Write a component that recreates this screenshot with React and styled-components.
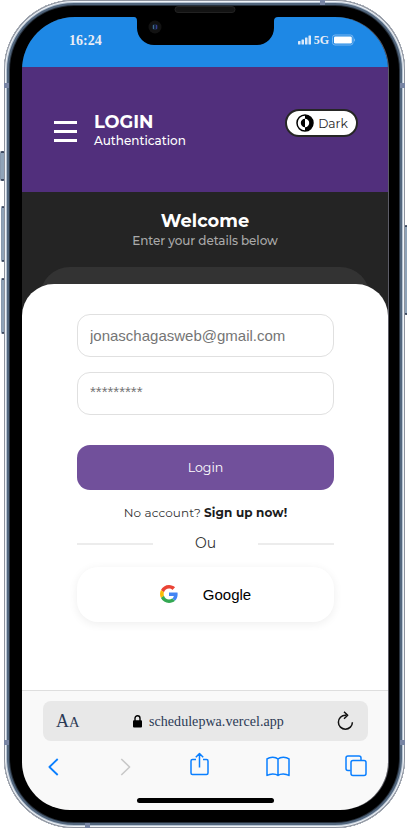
import React from 'react';
import styled, { createGlobalStyle } from 'styled-components';

const GlobalStyle = createGlobalStyle`
  * { box-sizing: border-box; }
  body { margin: 0; background: #fff; overflow: hidden; }
  button, input { font: inherit; margin: 0; }
`;

const brandFont = 'Montserrat, Inter, sans-serif';
const systemFont = '"Liberation Sans", Arial, sans-serif';
const serifFont = '"Liberation Serif", "Times New Roman", serif';

const Stage = styled.main`
  position: relative;
  width: 407px;
  height: 828px;
  padding: 0 2px 0 4px;
  overflow: hidden;
`;

const Phone = styled.div`
  position: relative;
  width: 401px;
  height: 828px;
  padding: 17px 17px 18px 18px;
  border-radius: 70px;
  background: #000;
  box-shadow:
    inset 0 0 0 1px #8d929d,
    inset 0 0 0 2px #f0f4f8,
    inset 0 0 0 3px #b6c3d2,
    inset 0 0 0 5px #52667d,
    inset 0 0 0 6px #27313d;
`;

const SideKey = styled.span`
  position: absolute;
  left: ${(p) => (p.$right ? '404px' : p.$wide ? '0' : '1px')};
  top: ${(p) => p.$top}px;
  width: ${(p) => (p.$wide ? 5 : 4)}px;
  height: ${(p) => p.$height}px;
  border: 1px solid #3c4960;
  border-width: 2px 1px;
  border-left-color: ${(p) => (p.$right ? '#25324a' : '#8798ad')};
  border-radius: 2px;
  background: #8fa3b8;
`;

const Band = styled.i`
  position: absolute;
  left: ${(p) => p.$left}px;
  top: ${(p) => p.$top}px;
  width: 5px;
  height: 5px;
  background: #7885a4;
`;

const Notch = styled.svg`
  position: absolute;
  left: 130px;
  top: 0;
  width: 144px;
  height: 48px;
`;

const Screen = styled.div`
  width: 366px;
  height: 793px;
  display: flex;
  flex-direction: column;
  overflow: hidden;
  border-radius: 53px 53px 48px 48px;
  background: #242424;
  box-shadow: 1px 0 0 #5c5c66;
`;

const StatusBar = styled.div`
  flex: none;
  height: 50px;
  padding: 0 32px 0 47px;
  display: flex;
  justify-content: space-between;
  background: #1e88e5;
  color: #e9edf5;
  font-family: ${serifFont};
  font-weight: 700;
`;

const Clock = styled.span`
  padding-top: 15px;
  font-size: 14px;
  line-height: 17px;
`;

const Signals = styled.div`
  display: flex;
  align-items: center;
  height: 12px;
  margin-top: 17px;
  font-size: 12px;
  gap: 3px;
`;

const Header = styled.header`
  flex: none;
  height: 125px;
  padding: 42px 30px 0 32px;
  display: flex;
  align-items: flex-start;
  background: #512f7c;
  color: #fff;
  font-family: ${brandFont};
`;

const Burger = styled.div`
  width: 23px;
  margin-top: 12px;
  display: grid;
  gap: 6px;
`;

const BurgerLine = styled.span`
  height: 3px;
  background: #fff;
`;

const Titles = styled.div`
  margin: 2px 0 0 17px;
  flex: 1;
`;

const Title = styled.h1`
  margin: 0;
  font-size: 17.8px;
  line-height: 21px;
  font-weight: 700;
  white-space: nowrap;
`;

const Subtitle = styled.p`
  margin: ${(p) => (p.$muted ? '1px' : '0')} 0 0;
  font-size: 12px;
  line-height: 17px;
  font-weight: 500;
  color: ${(p) => (p.$muted ? '#aaa' : '#fff')};
  letter-spacing: ${(p) => (p.$muted ? '-0.08px' : '0')};
  white-space: nowrap;
`;

const ThemeButton = styled.button`
  width: 73px;
  height: 28px;
  padding: 0 0 0 1px;
  display: flex;
  align-items: center;
  justify-content: center;
  gap: 4px;
  border: 2px solid #262626;
  border-radius: 14px;
  background: #fff;
  color: #242424;
  font-size: 12.3px;
`;

const Hero = styled.section`
  flex: none;
  height: 92px;
  padding-top: 18px;
  text-align: center;
  color: #fff;
  font-family: ${brandFont};
`;

const CardBack = styled.div`
  width: 330px;
  height: 32px;
  margin: 18px auto 0;
  border-radius: 30px 30px 0 0;
  background: #333;
`;

const Card = styled.form`
  flex: none;
  height: 406px;
  padding: 30px 54px 0 55px;
  display: flex;
  flex-direction: column;
  border-radius: 32px 32px 0 0;
  background: #fff;
  font-family: ${brandFont};
`;

const Field = styled.input`
  width: 100%;
  height: 43px;
  margin-bottom: 15px;
  padding: 0 12px 1px;
  border: 1px solid #e0e0e0;
  border-radius: 13px;
  outline: none;
  background: #fff;
  font-family: ${systemFont};
  font-size: 15px;
  &::placeholder { color: #757575; opacity: 1; }
`;

const MaskedField = styled(Field)`
  padding-bottom: 5px;
`;

const LoginButton = styled.button`
  height: 45px;
  margin-top: 15px;
  padding: 0 0 1px;
  border: 0;
  border-radius: 13px;
  background: #71509b;
  color: #fff;
  font-size: 12.6px;
`;

const SignUp = styled.p`
  margin: 15px 0 0;
  text-align: center;
  font-size: 12px;
  line-height: 16px;
  letter-spacing: 0.1px;
  color: #333;
  white-space: nowrap;
  b { color: #1c1c1c; }
`;

const Divider = styled.div`
  height: 18px;
  margin-top: 13px;
  display: grid;
  grid-template-columns: 76px 1fr 76px;
  align-items: center;
  text-align: center;
  font-size: 14px;
  color: #333;
`;

const Rule = styled.span`
  height: 2px;
  margin-top: 1px;
  background: #ececec;
`;

const GoogleButton = styled.button`
  height: 55px;
  margin-top: 15px;
  padding: 0 0 1px;
  display: flex;
  align-items: center;
  justify-content: center;
  gap: 25px;
  border: 0;
  border-radius: 21px;
  background: #fff;
  box-shadow: 0 2px 10px rgba(0, 0, 0, 0.07);
  color: #000;
  font-family: ${systemFont};
  font-size: 15px;
`;

const Browser = styled.footer`
  flex: 1;
  padding: 10px 20px 0 21px;
  border-top: 1px solid #dedede;
  background: #f9f9f9;
  font-family: ${serifFont};
`;

const AddressBar = styled.div`
  height: 40px;
  padding: 0 14px 0 13px;
  display: flex;
  align-items: center;
  border-radius: 8px;
  background: #e8e8e8;
  color: #2b3a55;
`;

const TextSize = styled.span`
  width: 77px;
  font-size: 18px;
  line-height: 20px;
  small { font-size: 14.5px; }
`;

const Address = styled.span`
  flex: 1;
  margin-left: 7px;
  padding-top: 1px;
  font-size: 14px;
  line-height: 20px;
  letter-spacing: 0.05px;
`;

const Toolbar = styled.nav`
  height: 26px;
  margin-top: 11px;
  padding-left: 5px;
  display: grid;
  grid-template-columns: 72px 70px 76px 79px 22px;
  align-items: start;
`;

const Glyph = styled.svg`
  flex: none;
  display: block;
  width: ${(p) => p.$w}px;
  height: ${(p) => p.$h}px;
  margin-top: ${(p) => p.$drop || 0}px;
  fill: none;
  stroke: ${(p) => p.$color || 'none'};
  stroke-width: 1.5;
  stroke-linejoin: round;
`;

const HomeBar = styled.div`
  width: 137px;
  height: 5px;
  margin: 20px auto 0;
  border-radius: 3px;
  background: #000;
`;

const blue = '#0a7fff';

function StatusIcons() {
  return (
    <Signals>
      <Glyph $w={13} $h={10} viewBox="0 0 13 10">
        <g fill="#dbe9fa">
          <rect y="6" width="2.5" height="3.5" rx=".5" />
          <rect x="3.5" y="4.5" width="2.5" height="5" rx=".5" />
          <rect x="7" y="2.5" width="2.5" height="7" rx=".5" />
          <rect x="10.5" y=".5" width="2.5" height="9" rx=".5" />
        </g>
      </Glyph>
      <span>5G</span>
      <Glyph $w={24} $h={12} viewBox="0 0 24 12">
        <rect x=".5" y="1" width="20.5" height="10" rx="2.5" stroke="#78b6f0" strokeWidth="1" />
        <rect x="2" y="2.5" width="17.8" height="7" rx="1.3" fill="#fff" />
        <path d="M22 4.3C23.4 5 23.4 7 22 7.7Z" fill="#78b6f0" />
      </Glyph>
    </Signals>
  );
}

function GoogleLogo() {
  return (
    <Glyph $w={18} $h={18} viewBox="0 0 48 48">
      <path fill="#EA4335" d="M24 9.5c3.54 0 6.71 1.22 9.21 3.6l6.85-6.85C35.9 2.38 30.47 0 24 0 14.62 0 6.51 5.38 2.56 13.22l7.98 6.19C12.43 13.72 17.74 9.5 24 9.5z" />
      <path fill="#4285F4" d="M46.98 24.55c0-1.57-.15-3.09-.38-4.55H24v9.02h12.94c-.58 2.96-2.26 5.48-4.78 7.18l7.73 6c4.51-4.18 7.09-10.36 7.09-17.65z" />
      <path fill="#FBBC05" d="M10.53 28.59A14.5 14.5 0 0 1 9.77 24c0-1.6.27-3.14.76-4.59l-7.98-6.19A23.9 23.9 0 0 0 0 24c0 3.88.92 7.54 2.56 10.78l7.97-6.19z" />
      <path fill="#34A853" d="M24 48c6.48 0 11.93-2.13 15.89-5.81l-7.73-6c-2.15 1.45-4.92 2.3-8.16 2.3-6.26 0-11.57-4.22-13.47-9.91l-7.98 6.19C6.51 42.62 14.62 48 24 48z" />
    </Glyph>
  );
}

function PhoneNotch() {
  return (
    <Notch viewBox="0 0 144 48">
      <path fill="#000" d="M0 16H144V17Q140 17 140 21V28A17 17 0 0 1 123 45H20A17 17 0 0 1 3 28V21Q3 17 0 17Z" />
      <rect x="41" y="6.5" width="60" height="6" rx="3" fill="#131313" stroke="#222" />
      <circle cx="21" cy="27" r="6.5" fill="#121212" />
      <circle cx="21" cy="27" r="3" fill="#17263c" />
      <path d="M19.5 25v4" stroke="#426b8b" />
      <path d="M22.5 25v4" stroke="#393a91" />
    </Notch>
  );
}

export default function App() {
  return (
    <Stage>
      <GlobalStyle />
      <SideKey $wide $top={151} $height={30} />
      <SideKey $top={206} $height={56} />
      <SideKey $top={278} $height={56} />
      <SideKey $right $top={225} $height={90} />
      <Phone>
        <Screen>
          <StatusBar>
            <Clock>16:24</Clock>
            <StatusIcons />
          </StatusBar>
          <Header>
            <Burger>
              <BurgerLine />
              <BurgerLine />
              <BurgerLine />
            </Burger>
            <Titles>
              <Title>LOGIN</Title>
              <Subtitle>Authentication</Subtitle>
            </Titles>
            <ThemeButton>
              <Glyph $w={18} $h={18} viewBox="0 0 18 18">
                <circle cx="9" cy="9" r="8" fill="#fff" stroke="#000" strokeWidth="1.5" />
                <path d="M9 1a8 8 0 0 1 0 16v-3.8a4.2 4.2 0 0 0 0-8.4ZM9 4.8v8.4a4.2 4.2 0 0 1 0-8.4Z" fill="#000" />
              </Glyph>
              Dark
            </ThemeButton>
          </Header>
          <Hero>
            <Title as="h2">Welcome</Title>
            <Subtitle $muted>Enter your details below</Subtitle>
            <CardBack />
          </Hero>
          <Card onSubmit={(e) => e.preventDefault()}>
            <Field placeholder="jonaschagasweb@gmail.com" />
            <MaskedField placeholder="*********" />
            <LoginButton>Login</LoginButton>
            <SignUp>No account? <b>Sign up now!</b></SignUp>
            <Divider><Rule />Ou<Rule /></Divider>
            <GoogleButton type="button"><GoogleLogo />Google</GoogleButton>
          </Card>
          <Browser>
            <AddressBar>
              <TextSize>A<small>A</small></TextSize>
              <Glyph $w={9} $h={13} viewBox="0 0 9 13">
                <path d="M2 7V3.3a2.5 2.5 0 0 1 5 0V7" stroke="#000" strokeWidth="1.4" />
                <rect y="5.3" width="9" height="7.2" rx="1" fill="#000" />
              </Glyph>
              <Address>schedulepwa.vercel.app</Address>
              <Glyph $w={17} $h={20} viewBox="0 0 17 20" $color="#111">
                <path d="M9.5 4.2H8.4a7 7 0 1 0 7 7M7 .7l3.7 3.5L7 7.7" />
              </Glyph>
            </AddressBar>
            <Toolbar>
              <Glyph $w={11} $h={18} $drop={6} viewBox="0 0 11 18" $color={blue}>
                <path d="M9.7 1L1.4 9l8.3 8" strokeWidth="1.8" />
              </Glyph>
              <Glyph $w={11} $h={18} $drop={6} viewBox="0 0 11 18" $color="#c8c8c8">
                <path d="M1.3 1l8.3 8-8.3 8" strokeWidth="1.6" />
              </Glyph>
              <Glyph $w={19} $h={24} viewBox="0 0 19 24" $color={blue}>
                <path d="M6 7.5H2.5Q1 7.5 1 9V21Q1 22.5 2.5 22.5H16.5Q18 22.5 18 21V9Q18 7.5 16.5 7.5H13M9.5 15.5V1.5M5.8 5.2l3.7-3.7 3.7 3.7" />
              </Glyph>
              <Glyph $w={24} $h={21} $drop={4} viewBox="0 0 24 21" $color={blue}>
                <path d="M12 3C9.5.5 4 .6 1 2.8V19.5C4 17.5 9.5 17.3 12 19.5C14.5 17.3 20 17.5 23 19.5V2.8C20 .6 14.5.5 12 3ZM12 3V19.5" />
              </Glyph>
              <Glyph $w={22} $h={22} $drop={3} viewBox="0 0 22 22" $color={blue}>
                <rect x="6" y="5.5" width="15" height="15" rx="2" />
                <path d="M5.5 15.5H3Q1 15.5 1 13.5V3Q1 1 3 1H14Q16 1 16 3V5" />
              </Glyph>
            </Toolbar>
            <HomeBar />
          </Browser>
        </Screen>
        <Band $left={0} $top={83} />
        <Band $left={396} $top={83} />
        <Band $left={0} $top={740} />
        <Band $left={396} $top={740} />
        <Band $left={316} $top={0} />
        <Band $left={81} $top={823} />
        <PhoneNotch />
      </Phone>
    </Stage>
  );
}
